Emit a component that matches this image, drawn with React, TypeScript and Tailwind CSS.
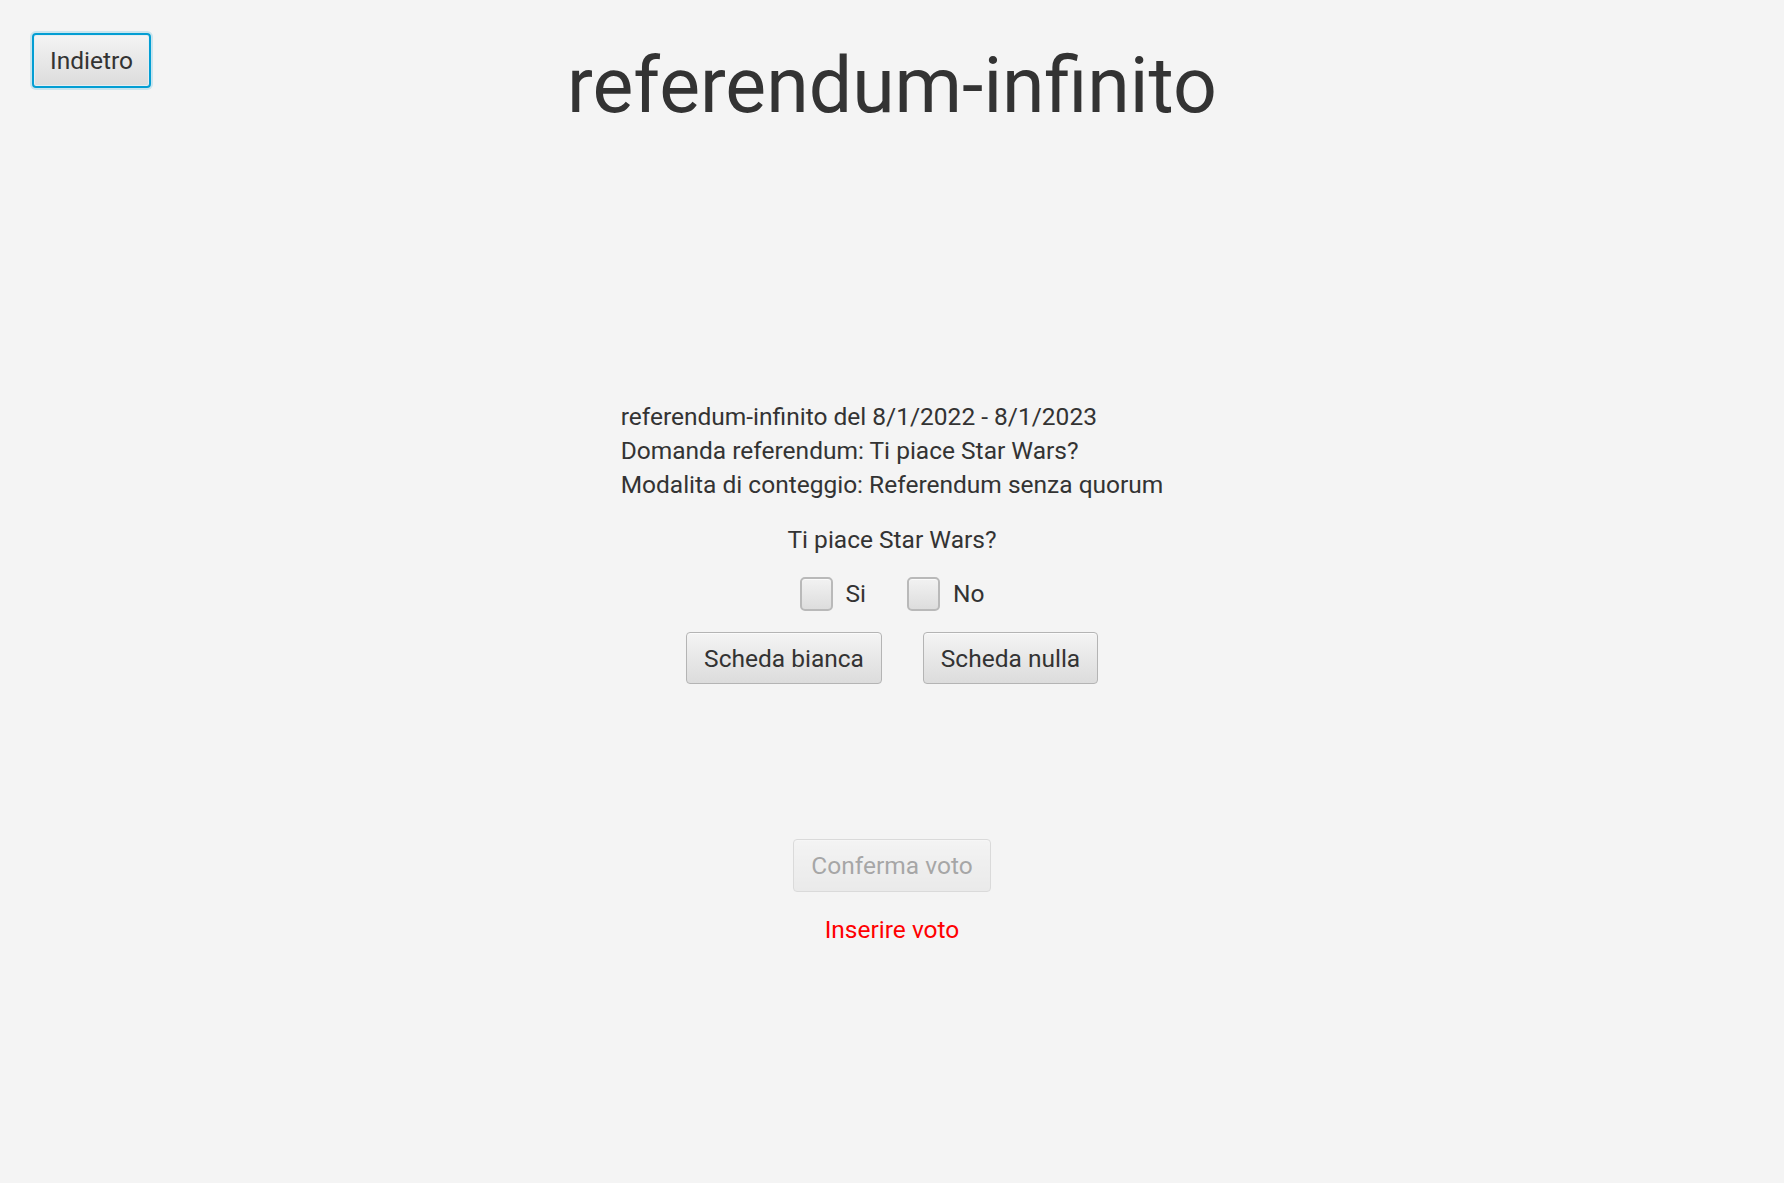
import React from 'react';

const font = { fontFamily: 'Roboto, "Noto Sans", Arial, sans-serif' };

// JavaFX "modena"-like push button
const FxButton = ({
  children,
  className = '',
  focused = false,
  disabled = false,
}: {
  children: React.ReactNode;
  className?: string;
  focused?: boolean;
  disabled?: boolean;
}) => (
  <button
    disabled={disabled}
    className={`flex items-center justify-center rounded-[4px] bg-gradient-to-b from-[#f4f4f4] to-[#dcdcdc] pt-[2px] text-[24.5px] leading-none text-[#333333] ${
      focused
        ? 'border-2 border-[#039ed3] shadow-[0_0_0_2px_rgba(3,158,211,0.18),inset_0_0_0_1px_#e4eef3]'
        : 'border border-[#b4b4b4] shadow-[inset_0_1px_0_#fbfbfb]'
    } ${disabled ? 'opacity-40' : ''} ${className}`}
  >
    {children}
  </button>
);

const CheckBox = ({ label }: { label: string }) => (
  <label className="flex items-center gap-[13px] text-[24.5px] leading-none text-[#333333]">
    <span className="h-[34px] w-[33px] rounded-[5px] border-2 border-[#b9b9b9] bg-gradient-to-b from-[#f2f2f2] to-[#dddddd] shadow-[inset_0_1px_0_#fafafa]" />
    {label}
  </label>
);

export default function App() {
  return (
    <div style={font} className="flex min-h-[1183px] w-full flex-col bg-[#f4f4f4] text-[#333333]">
      {/* header: back button + centered title */}
      <div className="grid grid-cols-[1fr_auto_1fr]">
        <div>
          <FxButton focused className="ml-[32px] mt-[33px] h-[55px] w-[119px]">
            Indietro
          </FxButton>
        </div>
        <h1 className="mt-[47px] text-[77px] font-normal leading-[78px]">referendum-infinito</h1>
        <div />
      </div>

      {/* referendum info */}
      <div className="mt-[275px] flex flex-col items-center">
        <div className="text-[24.5px] leading-[34px]">
          <div>referendum-infinito del 8/1/2022 - 8/1/2023</div>
          <div>Domanda referendum: Ti piace Star Wars?</div>
          <div>Modalita di conteggio: Referendum senza quorum</div>
        </div>

        <div className="mt-[21px] text-[24.5px] leading-[34px]">Ti piace Star Wars?</div>

        <div className="mt-[20px] flex h-[34px] items-center gap-[41px]">
          <CheckBox label="Si" />
          <CheckBox label="No" />
        </div>

        <div className="mt-[21px] flex gap-[41px]">
          <FxButton className="h-[52px] w-[196px]">Scheda bianca</FxButton>
          <FxButton className="h-[52px] w-[175px]">Scheda nulla</FxButton>
        </div>

        <FxButton disabled className="mt-[155px] h-[53px] w-[198px]">
          Conferma voto
        </FxButton>

        <div className="mt-[21px] text-[24.5px] leading-[34px] text-[#ff0000]">Inserire voto</div>
      </div>
    </div>
  );
}
